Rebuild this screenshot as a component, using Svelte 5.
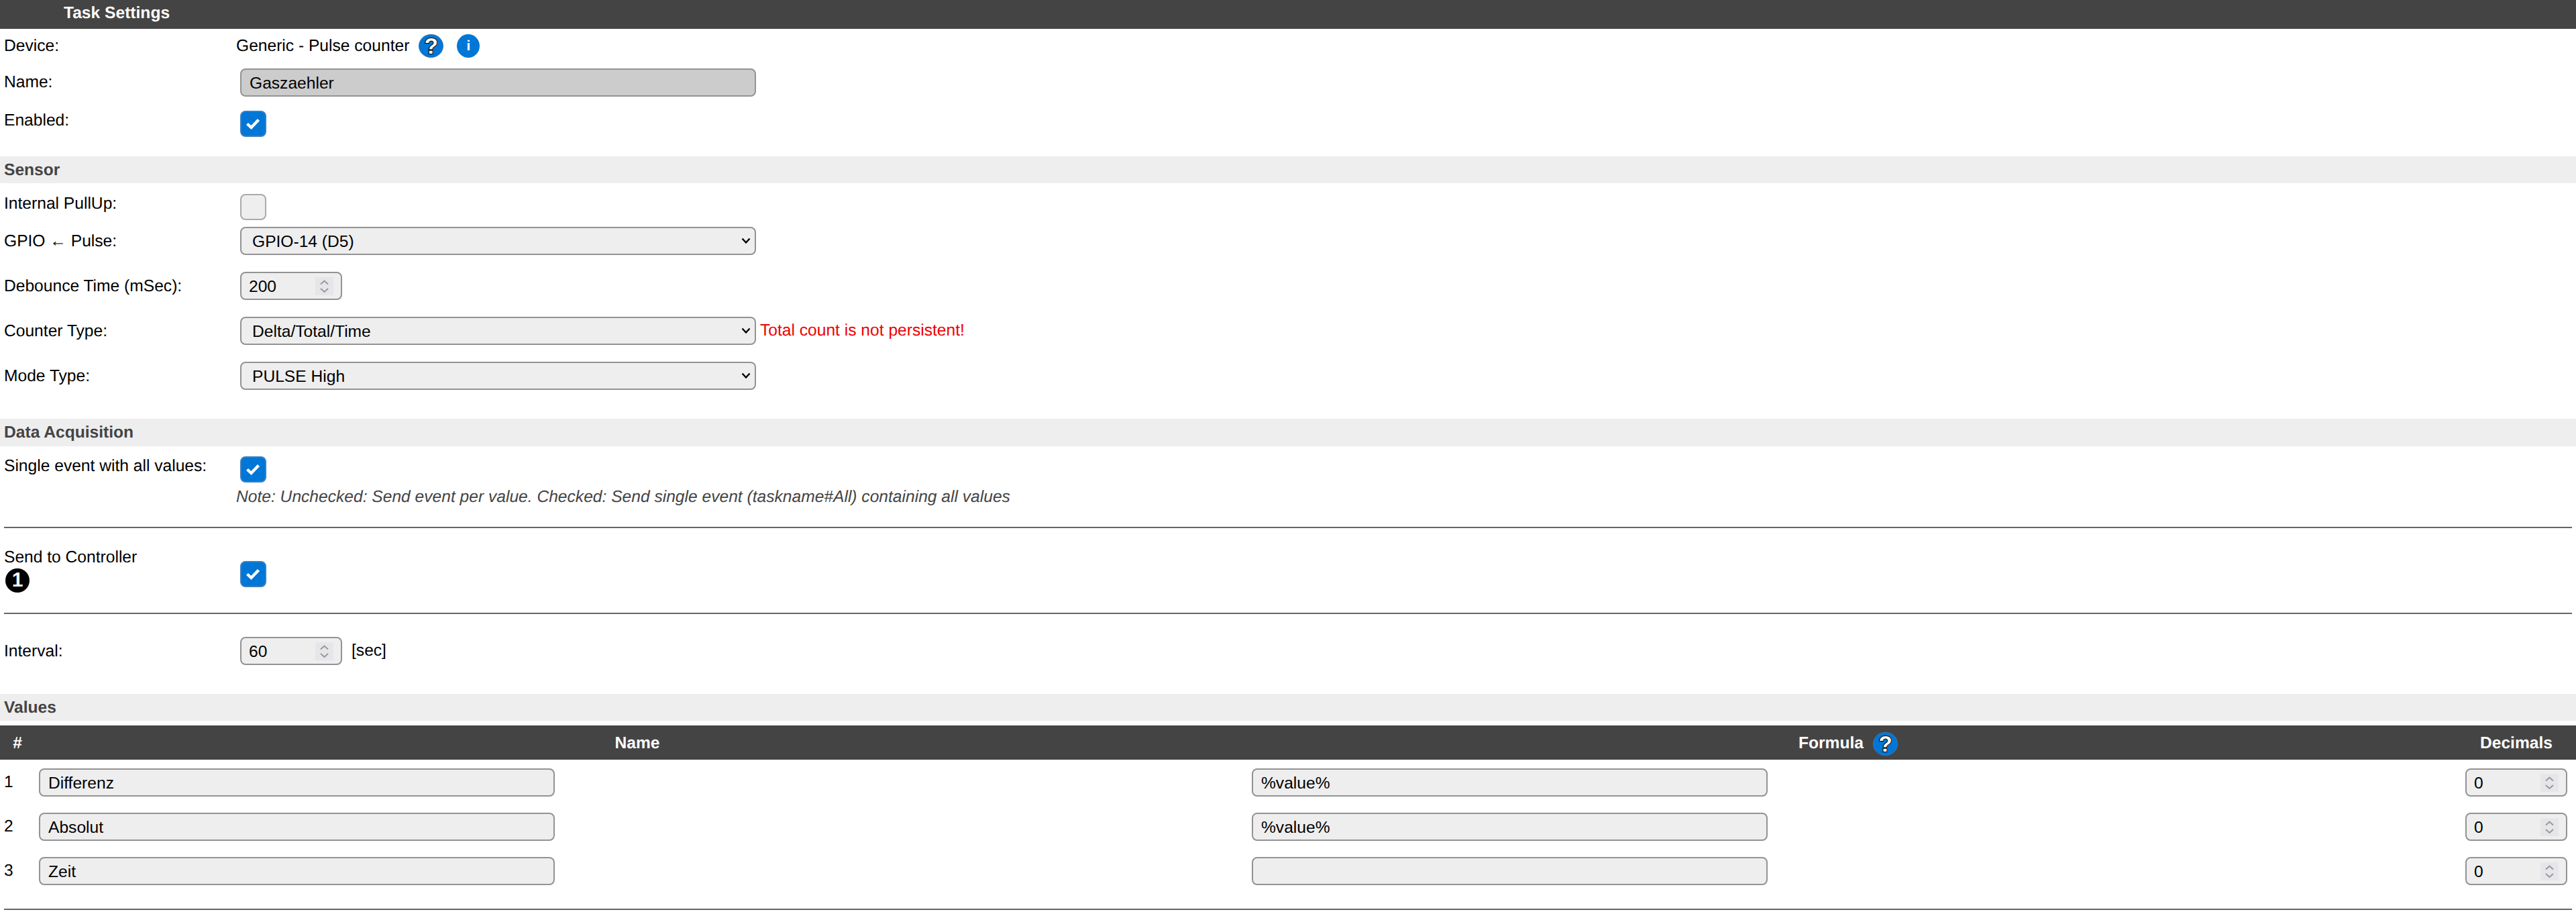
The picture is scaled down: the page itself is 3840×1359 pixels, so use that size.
<script lang="ts">
	const values = [
		{ id: 1, name: 'Differenz', formula: '%value%', decimals: 0 },
		{ id: 2, name: 'Absolut', formula: '%value%', decimals: 0 },
		{ id: 3, name: 'Zeit', formula: '', decimals: 0 }
	];
</script>

<div class="page">
	<div class="topbar">Task Settings</div>

	<div class="row device">
		<span class="label">Device:</span>
		<div class="device-value">
			<span>Generic - Pulse counter</span>
			<span class="help">?</span>
			<span class="info">i</span>
		</div>
	</div>
	<div class="row name">
		<span class="label">Name:</span>
		<input class="text locked" type="text" value="Gaszaehler" />
	</div>
	<div class="row enabled">
		<span class="label">Enabled:</span>
		<span class="check on">
			<svg viewBox="0 0 38 38"><path d="M10.5 19.5 16.5 25 27.5 13.5" /></svg>
		</span>
	</div>

	<div class="section sensor">Sensor</div>

	<div class="row pullup">
		<span class="label">Internal PullUp:</span>
		<span class="check"></span>
	</div>
	<div class="row gpio">
		<span class="label">GPIO ← Pulse:</span>
		<select class="text"><option>GPIO-14 (D5)</option></select>
	</div>
	<div class="row field">
		<span class="label">Debounce Time (mSec):</span>
		<input class="num" type="number" value="200" />
	</div>
	<div class="row field">
		<span class="label">Counter Type:</span>
		<div class="inline">
			<select class="text"><option>Delta/Total/Time</option></select>
			<span class="warn">Total count is not persistent!</span>
		</div>
	</div>
	<div class="row field">
		<span class="label">Mode Type:</span>
		<select class="text"><option>PULSE High</option></select>
	</div>

	<div class="section acquisition">Data Acquisition</div>

	<div class="row single">
		<span class="label">Single event with all values:</span>
		<span class="check on">
			<svg viewBox="0 0 38 38"><path d="M10.5 19.5 16.5 25 27.5 13.5" /></svg>
		</span>
	</div>
	<div class="note">Note: Unchecked: Send event per value. Checked: Send single event (taskname#All) containing all values</div>
	<hr class="rule first" />

	<div class="row controller">
		<div class="controller-label">
			<span>Send to Controller</span>
			<span class="badge">1</span>
		</div>
		<span class="check on">
			<svg viewBox="0 0 38 38"><path d="M10.5 19.5 16.5 25 27.5 13.5" /></svg>
		</span>
	</div>
	<hr class="rule second" />

	<div class="row interval">
		<span class="label">Interval:</span>
		<div class="inline">
			<input class="num" type="number" value="60" />
			<span class="unit">[sec]</span>
		</div>
	</div>

	<div class="section values">Values</div>

	<div class="grid head">
		<span>#</span>
		<span>Name</span>
		<span class="formula-head">Formula <span class="help small">?</span></span>
		<span>Decimals</span>
	</div>
	{#each values as v}
		<div class="grid value-row">
			<span class="idx">{v.id}</span>
			<div class="col-name"><input class="text" type="text" value={v.name} /></div>
			<div class="col-formula"><input class="text" type="text" value={v.formula} /></div>
			<div class="col-dec"><input class="num" type="number" value={v.decimals} /></div>
		</div>
	{/each}
	<hr class="rule last" />
</div>

<style>
	:global(body) {
		margin: 0;
		background: #fff;
		overflow: hidden;
	}

	.page {
		height: 1359px;
		overflow: hidden;
		font-family: "Liberation Sans", Arial, sans-serif;
		font-size: 24.6px;
		text-rendering: geometricPrecision;
		color: #000;
	}

	.topbar {
		height: 43px;
		line-height: 39px;
		padding-left: 95px;
		background: #444;
		color: #fff;
		font-weight: 700;
	}

	.row {
		display: grid;
		grid-template-columns: 358px 1fr;
		align-items: start;
	}

	.label {
		padding-left: 6px;
		line-height: 30px;
	}

	.device {
		height: 59px;
		padding-top: 8px;
		box-sizing: border-box;
	}

	.device .label {
		margin-top: 3px;
	}

	.device-value {
		display: flex;
		align-items: center;
		margin-left: -6px;
		height: 35px;
	}

	.help {
		display: inline-flex;
		align-items: center;
		justify-content: center;
		width: 37px;
		height: 35px;
		margin-left: 14px;
		border-radius: 50%;
		background: #0076d6;
		border: 1px solid #3a78b0;
		box-sizing: border-box;
		color: #fff;
		font-weight: 700;
		font-size: 33px;
		-webkit-text-stroke: 2px #000;
		paint-order: stroke fill;
	}

	.info {
		display: inline-flex;
		align-items: center;
		justify-content: center;
		width: 34px;
		height: 35px;
		margin-left: 20px;
		border-radius: 50%;
		background: #0076d6;
		color: #fff;
		font-weight: 700;
		font-size: 21px;
	}

	.text,
	.num {
		box-sizing: border-box;
		height: 42px;
		margin: 0;
		padding-top: 1px;
		border: 2px solid #939393;
		border-radius: 8px;
		background-color: #eee;
		font-family: inherit;
		font-size: inherit;
		color: #000;
		outline: none;
	}

	.text {
		width: 769px;
		padding-right: 12px;
		padding-left: 12px;
		padding-bottom: 0;
	}

	select.text {
		padding-right: 30px;
		padding-left: 16px;
		appearance: none;
		background-image: url("data:image/svg+xml,%3Csvg xmlns='http://www.w3.org/2000/svg' width='14' height='10'%3E%3Cpath d='M1.5 1.5 7 7.5 12.5 1.5' fill='none' stroke='%23000' stroke-width='2.4'/%3E%3C/svg%3E");
		background-repeat: no-repeat;
		background-position: right 6px center;
	}

	.num {
		width: 152px;
		padding-right: 40px;
		padding-left: 11px;
		padding-bottom: 0;
		appearance: textfield;
		background-image: url("data:image/svg+xml,%3Csvg xmlns='http://www.w3.org/2000/svg' width='27' height='27'%3E%3Crect width='27' height='27' fill='%23e6e6ea'/%3E%3Cpath d='M8 10.5 13.5 5.5 19 10.5M8 17 13.5 22 19 17' fill='none' stroke='%23999' stroke-width='2'/%3E%3C/svg%3E");
		background-repeat: no-repeat;
		background-position: right 11px center;
	}

	.num::-webkit-inner-spin-button,
	.num::-webkit-outer-spin-button {
		appearance: none;
		margin: 0;
	}

	.locked {
		background-color: #ccc;
	}

	.name {
		height: 42px;
	}

	.name .label {
		margin-top: 6px;
	}

	.check {
		display: block;
		box-sizing: border-box;
		width: 39px;
		height: 39px;
		border: 2px solid #aaa;
		border-radius: 8px;
		background: #eee;
	}

	.check.on {
		border-color: #3a7fc0;
		background: #0076d6;
	}

	.check svg {
		display: block;
		width: 38px;
		height: 38px;
		margin: -2px;
		fill: none;
		stroke: #fff;
		stroke-width: 4.4;
	}

	.enabled {
		margin-top: 21px;
	}

	.section {
		height: 40px;
		line-height: 42px;
		padding-left: 6px;
		background: #eee;
		color: #444;
		font-weight: 700;
	}

	.sensor {
		margin-top: 29px;
	}

	.pullup {
		margin-top: 16px;
	}

	.gpio {
		margin-top: 10px;
	}

	.gpio .label,
	.field .label,
	.interval .label {
		margin-top: 7px;
	}

	.field {
		margin-top: 25px;
	}

	.inline {
		display: flex;
		align-items: center;
	}

	.warn {
		margin-left: 6px;
		color: #e00;
	}

	.acquisition {
		margin-top: 43px;
		height: 41px;
	}

	.single {
		margin-top: 15px;
	}

	.note {
		margin-top: 7px;
		padding-left: 352px;
		line-height: 30px;
		font-style: italic;
		color: #444;
	}

	.rule {
		height: 2px;
		margin: 0 6px;
		border: 0;
		background: #666;
	}

	.first {
		margin-top: 29px;
	}

	.controller {
		margin-top: 29px;
	}

	.controller .check {
		margin-top: 20px;
	}

	.controller-label {
		display: flex;
		flex-direction: column;
		align-items: flex-start;
		padding-left: 6px;
		line-height: 30px;
	}

	.badge {
		display: flex;
		align-items: center;
		justify-content: center;
		width: 36px;
		height: 36px;
		margin-top: 1px;
		margin-left: 2px;
		border-radius: 50%;
		background: #000;
		color: #fff;
		font-weight: 700;
		font-size: 30px;
	}

	.second {
		margin-top: 30px;
	}

	.interval {
		margin-top: 34px;
	}

	.unit {
		margin-left: 14px;
	}

	.values {
		margin-top: 43px;
	}

	.grid {
		display: grid;
		grid-template-columns: 52px 1796px 1814px 178px;
	}

	.head {
		box-sizing: border-box;
		height: 51px;
		padding-top: 2px;
		margin-top: 7px;
		align-items: center;
		justify-items: center;
		background: #444;
		color: #fff;
		font-weight: 700;
	}

	.formula-head {
		display: flex;
		align-items: center;
	}

	.help.small {
		margin-left: 14px;
		margin-top: 2px;
	}

	.value-row {
		align-items: center;
		margin-top: 24px;
	}

	.head + .value-row {
		margin-top: 13px;
	}

	.idx {
		padding-left: 6px;
	}

	.col-name {
		padding-left: 6px;
	}

	.col-formula {
		padding-left: 18px;
	}

	.col-dec {
		padding-left: 13px;
	}

	.last {
		margin-top: 35px;
	}
</style>
